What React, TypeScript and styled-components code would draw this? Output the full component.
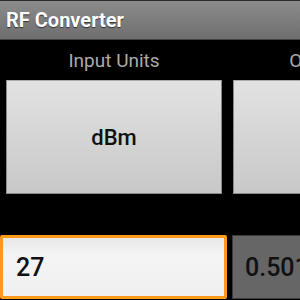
import React from "react";
import styled, { createGlobalStyle } from "styled-components";

const GlobalStyle = createGlobalStyle`
  html, body {
    margin: 0;
    padding: 0;
    background: #000;
    overflow: hidden;
  }
  body {
    font-family: Roboto, "Noto Sans", sans-serif;
  }
`;

const Screen = styled.div`
  width: 300px;
  height: 300px;
  overflow: hidden;
  background: #000;
`;

const TitleBar = styled.div`
  height: 40px;
  box-sizing: border-box;
  border-top: 1px solid #2a2a2a;
  border-bottom: 1px solid #444;
  background: linear-gradient(#8c8c8c, #6e6e6e);
  display: flex;
  align-items: center;
  padding-left: 6px;
`;

const Title = styled.h1`
  margin: 0;
  font-size: 20px;
  font-weight: bold;
  color: #fff;
  text-shadow: 0 1px 1px rgba(0, 0, 0, 0.6);
`;

const Columns = styled.div`
  display: flex;
  width: 460px;
`;

const Column = styled.div`
  width: 228px;
  flex-shrink: 0;
  display: flex;
  flex-direction: column;
`;

const Label = styled.div`
  height: 40px;
  display: flex;
  align-items: center;
  justify-content: center;
  font-size: 19px;
  color: #ababab;
`;

const UnitButton = styled.div<{ $left?: number }>`
  margin: 0 6px 0 ${(p) => p.$left ?? 6}px;
  height: 114px;
  box-sizing: border-box;
  border: 1px solid #8a8a8a;
  border-top-color: #aaa;
  background: linear-gradient(#e2e2e2, #c8c8c8);
  display: flex;
  align-items: center;
  justify-content: center;
  font-size: 22px;
  font-weight: 500;
  color: #111;
`;

const Fields = styled.div`
  display: flex;
  margin-top: 41px;
  gap: 5px;
  width: 460px;
`;

const InputBox = styled.div`
  width: 227px;
  height: 64px;
  box-sizing: border-box;
  border: 3px solid #ff9a1a;
  border-radius: 2px;
  background: linear-gradient(#e8e8e8, #f4f4f4 30%, #f0f0f0);
  display: flex;
  align-items: center;
  padding-left: 13px;
  font-size: 25px;
  font-weight: 500;
  color: #111;
  flex-shrink: 0;
`;

const OutputBox = styled.div`
  width: 220px;
  height: 64px;
  box-sizing: border-box;
  border: 1px solid #3c3c3c;
  background: #666;
  display: flex;
  align-items: center;
  padding-left: 12px;
  font-size: 25px;
  font-weight: 500;
  color: #111;
  flex-shrink: 0;
`;

export default function App() {
  return (
    <Screen>
      <GlobalStyle />
      <TitleBar>
        <Title>RF Converter</Title>
      </TitleBar>
      <Columns>
        <Column>
          <Label>Input Units</Label>
          <UnitButton>dBm</UnitButton>
        </Column>
        <Column>
          <Label>Output Units</Label>
          <UnitButton $left={5}>W</UnitButton>
        </Column>
      </Columns>
      <Fields>
        <InputBox>27</InputBox>
        <OutputBox>0.501</OutputBox>
      </Fields>
    </Screen>
  );
}
